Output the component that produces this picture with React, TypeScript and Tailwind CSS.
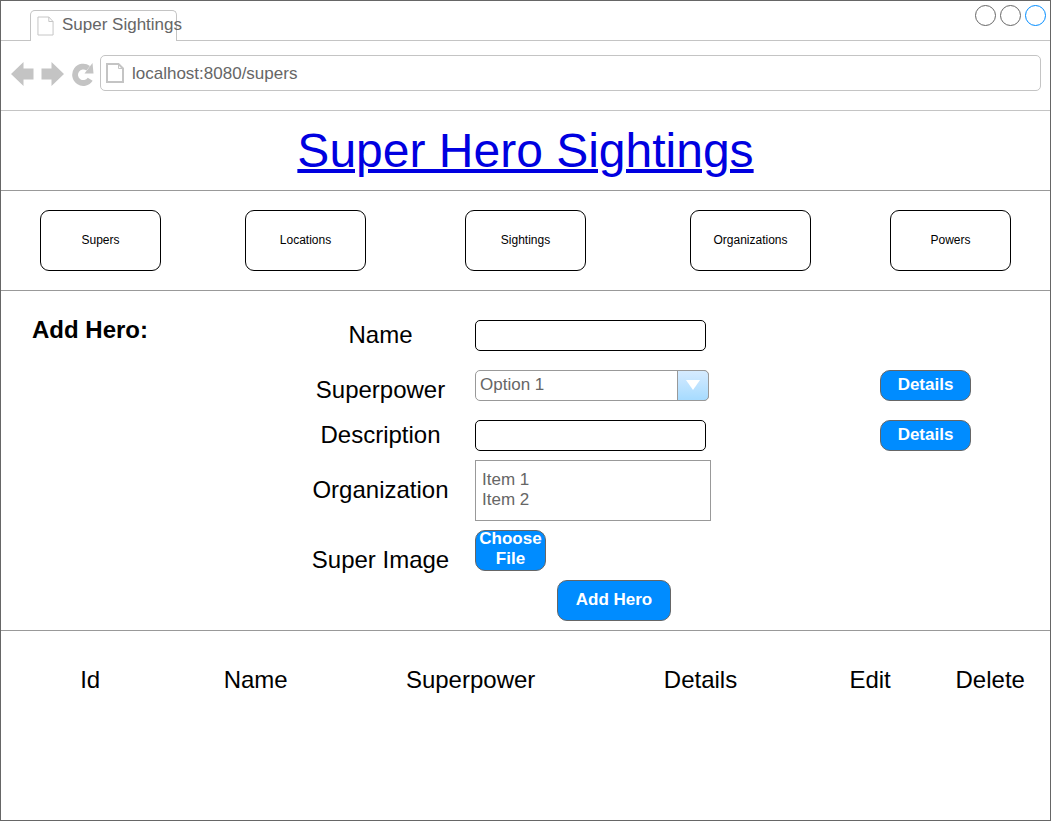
import type { ReactNode } from "react";

const pages = ["Supers", "Locations", "Sightings", "Organizations", "Powers"];

const columns = [
  { title: "Id", width: "w-[17.3%]" },
  { title: "Name", width: "w-[14.8%]" },
  { title: "Superpower", width: "w-[26.9%]" },
  { title: "Details", width: "w-[17.7%]" },
  { title: "Edit", width: "w-[15.2%]" },
  { title: "Delete", width: "w-[8.1%]" },
];

const blue =
  "rounded-[10px] border border-[#666] bg-[#008cff] text-[17px] font-bold text-white";
const textBox =
  "h-[31px] w-[231px] rounded-[5px] border border-black bg-white px-1 text-[17px]";

function PageIcon({ className, strokeWidth }: { className: string; strokeWidth: number }) {
  return (
    <svg
      className={className}
      viewBox="0 0 18 20"
      fill="none"
      stroke="#c4c4c4"
      strokeWidth={strokeWidth}
      preserveAspectRatio="none"
      aria-hidden="true"
    >
      <path d="M1 1H12.5L17 5.5V19H1Z" />
      <path d="M12.5 1V5.5H17" strokeWidth="1" />
    </svg>
  );
}

function BrowserBar() {
  return (
    <>
      <div className="flex h-10 items-end justify-between border-b border-[#c4c4c4] pl-[29px] pr-1">
        <div className="-mb-px flex h-[31px] w-[147px] items-center gap-2 whitespace-nowrap rounded-t-[5px] border border-b-0 border-[#c4c4c4] bg-white pl-[6px] text-[17px] leading-7 text-[#666]">
          <PageIcon className="h-5 w-[17px] shrink-0" strokeWidth={1} />
          <span className="pb-[2px]">Super Sightings</span>
        </div>
        <div className="flex gap-1 self-start pt-1">
          <button aria-label="Minimize" className="size-[21px] rounded-full border border-[#666]" />
          <button aria-label="Maximize" className="size-[21px] rounded-full border border-[#666]" />
          <button aria-label="Close" className="size-[21px] rounded-full border border-[#008cff]" />
        </div>
      </div>
      <div className="flex h-[70px] items-start border-b border-[#c4c4c4] pl-[10px] pr-[9px] pt-[14px]">
        <div className="flex h-9 items-center gap-[7px] pr-[6px] pt-[2px]">
          <button aria-label="Back">
            <svg className="h-6 w-[23px]" viewBox="0 0 23 24" fill="#c4c4c4">
              <path d="M0 12L12.5 0V6.5H22.5V17.5H12.5V24Z" />
            </svg>
          </button>
          <button aria-label="Forward">
            <svg className="h-6 w-[23px]" viewBox="0 0 23 24" fill="#c4c4c4">
              <path d="M23 12L10.5 0V6.5H.5V17.5H10.5V24Z" />
            </svg>
          </button>
          <button aria-label="Reload">
            <svg className="h-6 w-[23px]" viewBox="0 0 23 24">
              <path d="M19.2 17.2A8.2 8.2 0 1 1 17.2 6.2" fill="none" stroke="#c4c4c4" strokeWidth="5.8" />
              <path d="M21.5 1L22.5 11.5H13.5Z" fill="#c4c4c4" />
            </svg>
          </button>
        </div>
        <div className="flex h-9 flex-1 items-center gap-2 rounded-[5px] border border-[#c4c4c4] pl-[5px]">
          <PageIcon className="h-5 w-[18px] shrink-0" strokeWidth={2} />
          <input
            aria-label="Address"
            className="min-w-0 flex-1 pt-[2px] text-[17px] text-[#666] outline-none"
            defaultValue="localhost:8080/supers"
          />
        </div>
      </div>
    </>
  );
}

function Row({
  label,
  id,
  labelClass = "",
  rowClass = "h-[50px] items-center",
  action,
  children,
}: {
  label: string;
  id: string;
  labelClass?: string;
  rowClass?: string;
  action?: string;
  children: ReactNode;
}) {
  return (
    <div className={`grid grid-cols-[181fr_409fr_170fr] ${rowClass}`}>
      <label htmlFor={id} className={`self-center text-center text-2xl ${labelClass}`}>
        {label}
      </label>
      <div className="pl-1">{children}</div>
      {action && (
        <div>
          <button type="button" aria-label={action} className={`${blue} block h-[31px] w-[91px]`}>
            Details
          </button>
        </div>
      )}
    </div>
  );
}

function HeroForm() {
  return (
    <form
      onSubmit={(e) => e.preventDefault()}
      className="grid grid-cols-[289fr_760fr] border-b border-[#999] pb-[9px] pt-[19px]"
    >
      <h2 className="pl-[31px] pt-1 text-2xl font-bold">Add Hero:</h2>
      <div>
        <Row label="Name" id="name">
          <input id="name" className={`${textBox} block`} />
        </Row>
        <Row label="Superpower" id="superpower" labelClass="pt-[10px]" action="Superpower details">
          <div className="relative w-[234px]">
            <select
              id="superpower"
              className="block h-[31px] w-full appearance-none rounded-[5px] border border-[#999] bg-white pb-[1px] pl-1 text-[17px] text-[#666]"
            >
              <option>Option 1</option>
            </select>
            <span className="pointer-events-none absolute inset-y-0 right-0 flex w-8 items-center justify-center rounded-r-[5px] border border-[#999] bg-linear-to-b from-[#d6ebff] to-[#a6dbff]">
              <svg className="h-[10px] w-[14px]" viewBox="0 0 14 10" fill="white" aria-hidden="true">
                <path d="M0 0H14L7 10Z" />
              </svg>
            </span>
          </div>
        </Row>
        <Row label="Description" id="description" action="Description details">
          <input id="description" className={`${textBox} block`} />
        </Row>
        <Row label="Organization" id="organization" labelClass="pb-[2px]" rowClass="h-[60px] items-start">
          <select
            id="organization"
            multiple
            size={2}
            className="block h-[61px] w-[236px] appearance-none overflow-hidden border border-[#999] bg-white pl-[6px] pt-[9px] text-[17px] text-[#666]"
          >
            <option className="h-5 min-h-0 p-0 leading-5">Item 1</option>
            <option className="h-5 min-h-0 p-0 leading-5">Item 2</option>
          </select>
        </Row>
        <Row label="Super Image" id="image" labelClass="pt-5" rowClass="h-[60px] items-center">
          <label
            htmlFor="image"
            className={`${blue} flex h-[41px] w-[71px] items-center justify-center pb-[2px] text-center leading-[20px]`}
          >
            <input id="image" type="file" className="sr-only" />
            Choose File
          </label>
        </Row>
        <div className="grid grid-cols-[267fr_493fr]">
          <div />
          <div>
            <button type="submit" className={`${blue} block h-[41px] w-[114px] pb-[2px]`}>
              Add Hero
            </button>
          </div>
        </div>
      </div>
    </form>
  );
}

export default function App() {
  return (
    <div className="min-h-screen border border-[#666] bg-white font-['Liberation_Sans',Arial,sans-serif] text-black">
      <BrowserBar />
      <h1 className="flex h-20 items-center justify-center border-b border-[#999] text-5xl">
        <a href="#home" className="text-[#0000e0] underline decoration-4">
          Super Hero Sightings
        </a>
      </h1>
      <nav className="grid h-[100px] grid-cols-[199fr_211fr_229fr_221fr_179fr] items-center justify-items-center border-b border-[#999] pr-[10px]">
        {pages.map((page) => (
          <button key={page} className="h-[61px] w-[121px] rounded-[9px] border border-black pb-[2px] text-xs">
            {page}
          </button>
        ))}
      </nav>
      <HeroForm />
      <div className="pr-[18px] pt-[29px]">
        <table className="w-full table-fixed text-2xl">
          <thead>
            <tr>
              {columns.map((column) => (
                <th key={column.title} scope="col" className={`${column.width} h-10 p-0 text-center font-normal`}>
                  {column.title}
                </th>
              ))}
            </tr>
          </thead>
        </table>
      </div>
    </div>
  );
}
